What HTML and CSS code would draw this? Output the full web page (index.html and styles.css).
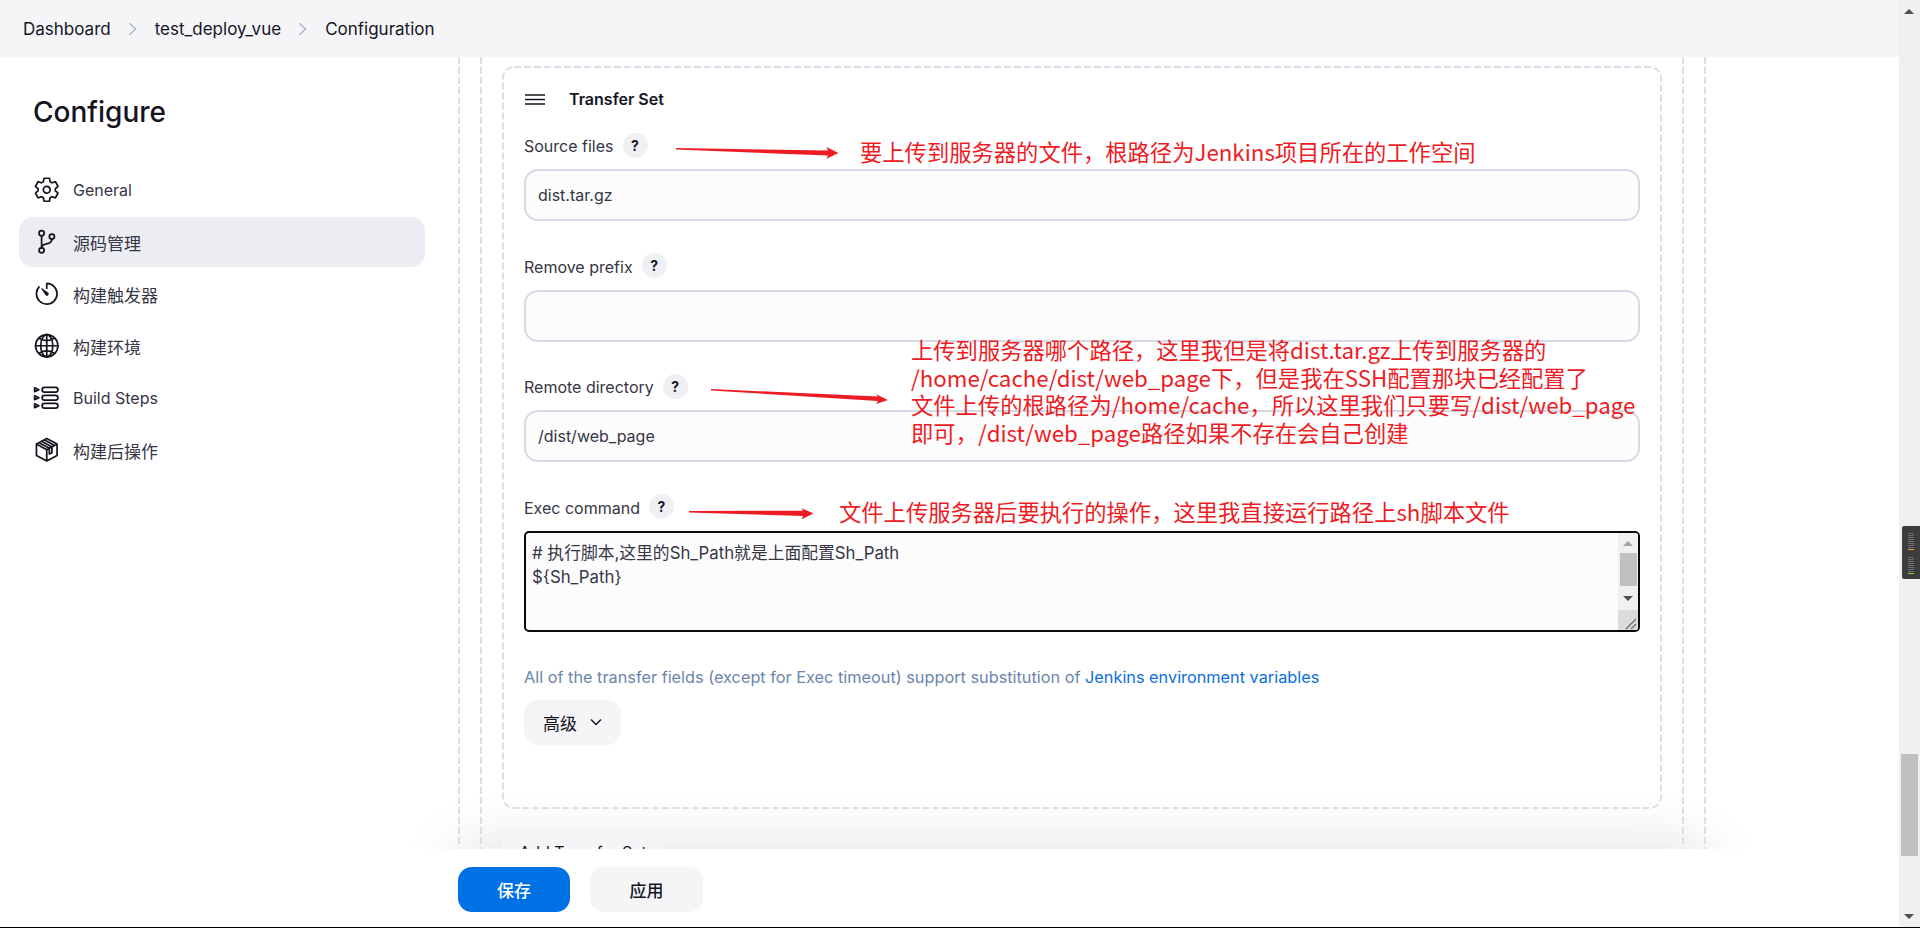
FILE: index.html
```html
<!DOCTYPE html>
<html lang="en">
    <head>
        <meta charset="UTF-8" />
        <meta name="viewport" content="width=device-width, initial-scale=1.0" />
        <title>test_deploy_vue Configuration</title>
        <link rel="stylesheet" href="styles.css">
    </head>
    <body>
        <div class="page">
            <div class="viewport">
                <nav class="breadcrumbs">
                    <a>Dashboard</a>
                    <svg class="crumb-sep" viewBox="0 0 10 16"><path d="M1.5 1.5 8.5 8l-7 6.5" /></svg>
                    <a>test_deploy_vue</a>
                    <svg class="crumb-sep" viewBox="0 0 10 16"><path d="M1.5 1.5 8.5 8l-7 6.5" /></svg>
                    <a>Configuration</a>
                </nav>

                <div class="layout">
                    <aside class="sidebar">
                        <h1>Configure</h1>
                        <ul class="side-list">
                            <li>
                                <svg viewBox="0 0 512 512"><path d="M262.29 192.31a64 64 0 1057.4 57.4 64.13 64.13 0 00-57.4-57.4zM416.39 256a154.34 154.34 0 01-1.53 20.79l45.21 35.46a10.81 10.81 0 012.45 13.75l-42.77 74a10.81 10.81 0 01-13.14 4.59l-44.9-18.08a16.11 16.11 0 00-15.17 1.75A164.48 164.48 0 01325 400.8a15.94 15.94 0 00-8.82 12.14l-6.73 47.89a11.08 11.08 0 01-10.68 9.17h-85.54a11.11 11.11 0 01-10.69-8.87l-6.72-47.82a16.07 16.07 0 00-9-12.22 155.3 155.3 0 01-21.46-12.57 16 16 0 00-15.11-1.71l-44.89 18.07a10.81 10.81 0 01-13.14-4.58l-42.77-74a10.8 10.8 0 012.45-13.75l38.21-30a16.05 16.05 0 006.07-14.08c-.36-4.17-.58-8.33-.58-12.5s.21-8.27.58-12.35a16 16 0 00-6.07-13.94l-38.19-30A10.81 10.81 0 0149.48 186l42.77-74a10.81 10.81 0 0113.14-4.59l44.9 18.08a16.11 16.11 0 0015.17-1.75A164.48 164.48 0 01187 111.2a15.94 15.94 0 008.82-12.14l6.73-47.89A11.08 11.08 0 01213.23 42h85.54a11.11 11.11 0 0110.69 8.87l6.72 47.82a16.07 16.07 0 009 12.22 155.3 155.3 0 0121.46 12.57 16 16 0 0015.11 1.71l44.89-18.07a10.81 10.81 0 0113.14 4.58l42.77 74a10.8 10.8 0 01-2.45 13.75l-38.21 30a16.05 16.05 0 00-6.07 14.08c.33 4.14.55 8.3.55 12.47z" /></svg>
                                General
                            </li>
                            <li class="active">
                                <svg viewBox="0 0 512 512"><circle cx="160" cy="96" r="48" /><circle cx="160" cy="416" r="48" /><path d="M160 368V144" /><circle cx="352" cy="160" r="48" /><path d="M352 208c0 128-192 48-192 160" /></svg>
                                <span class="zh">源码管理</span>
                            </li>
                            <li>
                                <svg viewBox="0 0 512 512"><path d="M112.91 128A191.85 191.85 0 0064 254c-1.18 106.35 85.65 193.8 192 194 106.2.2 192-85.83 192-192 0-104.54-83.55-189.61-187.5-192a4.36 4.36 0 00-4.5 4.37V152" /><path class="solid" d="M233.38 278.63l-79-113a8.13 8.13 0 0111.32-11.32l113 79a32.5 32.5 0 01-37.25 53.26 33.21 33.21 0 01-8.07-8.94z" /></svg>
                                <span class="zh">构建触发器</span>
                            </li>
                            <li>
                                <svg viewBox="0 0 512 512"><path d="M256 48C141.13 48 48 141.13 48 256s93.13 208 208 208 208-93.13 208-208S370.87 48 256 48z" /><path d="M256 48c-58.07 0-112.67 93.31-112.67 208S197.93 464 256 464s112.67-93.31 112.67-208S314.07 48 256 48z" /><path d="M117.33 117.33c38.24 27.15 86.38 43.34 138.67 43.34s100.43-16.19 138.67-43.34M394.67 394.67c-38.24-27.15-86.38-43.34-138.67-43.34s-100.43 16.19-138.67 43.34" /><path d="M256 48v416M464 256H48" /></svg>
                                <span class="zh">构建环境</span>
                            </li>
                            <li>
                                <svg viewBox="0 0 512 512"><rect x="170" y="62" width="294" height="90" rx="45" /><rect x="170" y="211" width="294" height="90" rx="45" /><rect x="170" y="360" width="294" height="90" rx="45" /><path d="M30 72l80 35-80 35zM30 221l80 35-80 35zM30 370l80 35-80 35z" /></svg>
                                Build Steps
                            </li>
                            <li>
                                <svg viewBox="0 0 512 512"><path d="M256 48 448 150V362L256 464 64 362V150zM64 150 256 256 448 150M256 256V464M160 98 352 204V310L304 336V230L112 124M208 72 400 178" /></svg>
                                <span class="zh">构建后操作</span>
                            </li>
                        </ul>
                    </aside>

                    <main class="content">
                        <div class="dash-outer">
                            <div class="dash-inner">
                                <section class="transfer-set">
                                    <svg class="set-frame" viewBox="0 0 1160 743"><rect x="1" y="1" width="1158" height="741" rx="11" /></svg>
                                    <div class="set-head">
                                        <svg class="drag" viewBox="0 0 20 11"><path d="M0 1h20M0 5.500h20M0 10h20" /></svg>
                                        <b>Transfer Set</b>
                                    </div>

                                    <div class="field">
                                        <div class="field-label">Source files <span class="help">?</span></div>
                                        <div class="text-input">dist.tar.gz</div>
                                    </div>
                                    <div class="field">
                                        <div class="field-label">Remove prefix <span class="help">?</span></div>
                                        <div class="text-input"></div>
                                    </div>
                                    <div class="field">
                                        <div class="field-label">Remote directory <span class="help">?</span></div>
                                        <div class="text-input">/dist/web_page</div>
                                    </div>
                                    <div class="field">
                                        <div class="field-label">Exec command <span class="help">?</span></div>
                                        <div class="code-input">
                                            <div class="code-text"># 执行脚本,这里的Sh_Path就是上面配置Sh_Path<br />${Sh_Path}</div>
                                            <div class="code-scroll">
                                                <div class="code-track">
                                                    <i class="tri up pale"></i>
                                                    <i class="code-thumb"></i>
                                                    <i class="tri down"></i>
                                                </div>
                                                <div class="code-corner">
                                                    <svg viewBox="0 0 12 12"><path d="M1 11 11 1M6 11l5-5" /></svg>
                                                </div>
                                            </div>
                                        </div>
                                    </div>

                                    <p class="hint">All of the transfer fields (except for Exec timeout) support substitution of <a>Jenkins environment variables</a></p>

                                    <button class="btn advanced"><span class="zh">高级</span>
                                        <svg viewBox="0 0 12 8"><path d="M1 1.500 6 6.500l5-5" /></svg>
                                    </button>
                                </section>
                                <button class="btn add-set">Add Transfer Set</button>
                            </div>
                        </div>
                    </main>
                </div>

                <div class="bottom-bar">
                    <button class="btn save">保存</button>
                    <button class="btn apply">应用</button>
                </div>

                <!-- annotations drawn on top of the screenshot -->
                <svg class="arrows" viewBox="0 0 1899 927">
                    <path d="M676 148 828 150.500 826.500 147 838.500 153 826.500 158.700 828 155.500 676 149.500z" />
                    <path d="M711 389 878 396.500 875.500 394 888 400 876 404 878 401 711 390.500z" />
                    <path d="M689 511 803 510.700 801.700 508.300 813.500 513.500 801.700 519.300 803 516 689 512.500z" />
                </svg>
                <div class="note note-source">要上传到服务器的文件，根路径为Jenkins项目所在的工作空间</div>
                <div class="note note-remote">上传到服务器哪个路径，这里我但是将dist.tar.gz上传到服务器的<br />/home/cache/dist/web_page下，但是我在SSH配置那块已经配置了<br />文件上传的根路径为/home/cache，所以这里我们只要写/dist/web_page<br />即可，/dist/web_page路径如果不存在会自己创建</div>
                <div class="note note-exec">文件上传服务器后要执行的操作，这里我直接运行路径上sh脚本文件</div>
            </div>

            <div class="page-scroll">
                <i class="tri up page-up"></i>
                <i class="page-thumb"></i>
                <i class="tri down page-down"></i>
            </div>
            <div class="meter">
                <div class="meter-group"><i></i><i></i><i></i><i></i><i></i><i></i><i></i><i></i><i class="orange"></i></div>
                <div class="meter-group"><i></i><i></i><i></i><i></i><i></i><i></i><i></i><i></i><i class="green"></i></div>
            </div>
        </div>
    </body>
</html>
```
FILE: styles.css
```css
* {
    box-sizing: border-box;
}
body {
    font-family: Inter, "Noto Sans CJK SC", sans-serif;
    font-size: 16px;
    color: #14141f;
    margin: 0;
    padding: 0;
    background-color: #fff;
    overflow: hidden;
}
.zh {
    font-size: 17px;
}
.page {
    position: relative;
    display: flex;
    height: 928px;
    border-bottom: 1px solid #000;
    overflow: hidden;
}
.viewport {
    position: relative;
    flex: 1;
    min-width: 0;
    overflow: hidden;
}

/* top bar */
.breadcrumbs {
    display: flex;
    align-items: center;
    height: 57px;
    padding-left: 23px;
    background-color: #f5f5f8;
    font-size: 17px;
}
.crumb-sep {
    width: 9px;
    height: 14px;
    margin: 0 18px 0 17px;
    fill: none;
    stroke: #a4b4cd;
    stroke-width: 1.5;
}

.layout {
    display: flex;
    height: 870px;
    overflow: hidden;
}

/* sidebar */
.sidebar {
    width: 458px;
    flex-shrink: 0;
    padding: 0 33px 0 19px;
}
.sidebar h1 {
    font-size: 28px;
    font-weight: 500;
    line-height: 40px;
    margin: 35px 0 33px 14px;
}
.side-list {
    list-style: none;
    margin: 0;
    padding: 0;
    display: flex;
    flex-direction: column;
    gap: 2px;
    color: #363645;
}
.side-list li {
    display: flex;
    align-items: center;
    gap: 12.500px;
    height: 50px;
    padding-left: 14px;
    border-radius: 14px;
}
.side-list li.active {
    background-color: #ecedf3;
}
.side-list svg {
    width: 27.500px;
    height: 27.500px;
    flex-shrink: 0;
    fill: none;
    stroke: #14141f;
    stroke-width: 32;
    stroke-linejoin: round;
    stroke-linecap: round;
}
.side-list svg .solid {
    fill: #14141f;
    stroke: none;
}

/* main form, nested dashed blocks */
.content {
    flex: 1;
    min-width: 0;
    padding-right: 193px;
}
.dash-outer, .dash-inner {
    height: 870px;
    background-image:
        repeating-linear-gradient(to bottom, #d9dfeb 0 7px, transparent 7px 10px),
        repeating-linear-gradient(to bottom, #d9dfeb 0 7px, transparent 7px 10px);
    background-size: 2px 100%;
    background-position: left top, right top;
    background-repeat: no-repeat;
}
.dash-outer {
    padding: 0 22px;
}
.dash-inner {
    padding: 9px 22px 0;
}
.transfer-set {
    position: relative;
    height: 743px;
    padding: 23px 22px 0;
}
.set-frame {
    position: absolute;
    left: 0;
    top: 0;
    width: 1160px;
    height: 743px;
    fill: none;
    stroke: #d9dfeb;
    stroke-width: 2;
    stroke-dasharray: 7 3;
}
.set-head {
    display: flex;
    align-items: center;
    height: 20px;
    gap: 24px;
    margin-left: 1px;
    margin-bottom: 24px;
}
.set-head b {
    font-weight: 600;
}
.drag {
    width: 20px;
    height: 11px;
    fill: none;
    stroke: #14141f;
    stroke-width: 1.500;
}
.field {
    margin-bottom: 32.670px;
}
.field-label {
    display: flex;
    align-items: center;
    gap: 9px;
    height: 26px;
    margin-bottom: 10px;
    color: #363645;
}
.help {
    display: inline-flex;
    align-items: center;
    justify-content: center;
    width: 25px;
    height: 25px;
    border-radius: 50%;
    background-color: #eef0f4;
    color: #14141f;
    font-size: 14px;
    font-weight: 700;
    margin-top: -2px;
}
.text-input {
    height: 52px;
    line-height: 48px;
    padding-left: 12px;
    border: 2px solid #d4dbe7;
    border-radius: 14px;
    background-color: #fcfcfd;
    color: #363645;
}
.code-input {
    display: flex;
    height: 101px;
    border: 2px solid #0a0a0a;
    border-radius: 5px;
    background-color: #fcfcfd;
    overflow: hidden;
}
.code-text {
    flex: 1;
    padding: 8px 6px;
    font-size: 16.800px;
    line-height: 24px;
    color: #363645;
}
.code-scroll {
    width: 20px;
    display: flex;
    flex-direction: column;
    background-color: #f0f0f0;
}
.code-track {
    height: 77px;
    display: flex;
    flex-direction: column;
    align-items: center;
    padding-top: 8px;
}
.code-thumb {
    display: block;
    width: 17px;
    height: 33px;
    margin: 7px 0 10px 1px;
    background-color: #c0c0c0;
}
.code-corner {
    flex: 1;
    background-color: #dcdcdc;
}
.code-corner svg {
    display: block;
    width: 12px;
    height: 12px;
    margin: 8px 0 0 7px;
    fill: none;
    stroke: #666;
    stroke-width: 1.200;
}
.tri {
    display: block;
    width: 0;
    height: 0;
    border-left: 5px solid transparent;
    border-right: 5px solid transparent;
}
.tri.up {
    border-bottom: 5px solid #505050;
}
.tri.up.pale {
    border-bottom-color: #a3a3a3;
}
.tri.down {
    border-top: 5px solid #505050;
}
.hint {
    margin: 0 0 11px;
    font-size: 16.300px;
    line-height: 24px;
    color: #6b85ab;
}
.hint a {
    color: #0b6fdc;
}

/* buttons */
.btn {
    font: inherit;
    border: none;
    border-radius: 14px;
    background-color: #f5f5f8;
    color: #14141f;
}
.advanced {
    display: flex;
    align-items: center;
    gap: 13px;
    width: 97px;
    height: 45px;
    padding: 0 0 0 19px;
}
.advanced svg {
    width: 12px;
    height: 8px;
    fill: none;
    stroke: #14141f;
    stroke-width: 1.500;
}
.add-set {
    display: block;
    width: 162px;
    height: 46px;
    margin-top: 20px;
}
.bottom-bar {
    position: absolute;
    left: 0;
    right: 0;
    top: 849px;
    height: 78px;
    padding: 18px 0 0 458px;
    display: flex;
    gap: 20px;
    align-items: flex-start;
    background-color: #fff;
}
/* soft shade over the form just above the bar */
.bottom-bar::before {
    content: "";
    position: absolute;
    z-index: -1;
    left: 458px;
    width: 1248px;
    top: 0;
    height: 78px;
    box-shadow: 0 0 60px rgba(20, 20, 40, 0.14);
}
.save, .apply {
    height: 45px;
    font-size: 17px;
    font-weight: 500;
}
.save {
    width: 112px;
    background-color: #0070e5;
    color: #fff;
}
.apply {
    width: 113px;
}

/* red notes on top */
.arrows {
    position: absolute;
    left: 0;
    top: 0;
    width: 1899px;
    height: 927px;
    fill: #ed1c24;
    pointer-events: none;
}
.note {
    position: absolute;
    color: #ed1c24;
    font-family: "Noto Sans CJK SC", sans-serif;
    font-size: 22.300px;
    line-height: 27.500px;
    white-space: nowrap;
}
.note-source {
    left: 860px;
    top: 138px;
}
.note-remote {
    left: 911px;
    top: 336px;
}
.note-exec {
    left: 839px;
    top: 498px;
}

/* page scrollbar and meter widget */
.page-scroll {
    position: relative;
    width: 21px;
    flex-shrink: 0;
    background-color: #f0f0f0;
}
.page-up {
    position: absolute;
    left: 5px;
    top: 9px;
}
.page-thumb {
    position: absolute;
    left: 2px;
    top: 754px;
    width: 17px;
    height: 102px;
    background-color: #c0c0c0;
}
.page-down {
    position: absolute;
    left: 5px;
    top: 914px;
}
.meter {
    position: absolute;
    right: 0;
    top: 526px;
    width: 18px;
    height: 53px;
    padding: 7px 0 0 6px;
    display: flex;
    flex-direction: column;
    gap: 6px;
    background-color: #3d3d3d;
    border-radius: 2px 0 0 2px;
}
.meter-group i {
    display: block;
    width: 6px;
    height: 1px;
    margin-bottom: 1px;
    background-color: #6e6e6e;
}
.meter-group i.orange {
    background-color: #f0a040;
}
.meter-group i.green {
    background-color: #7be020;
}
```
